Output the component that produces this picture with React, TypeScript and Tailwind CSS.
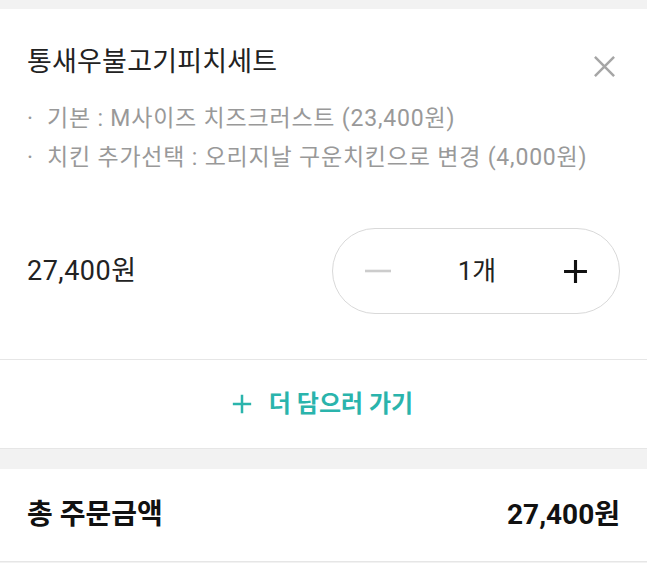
const font = { fontFamily: 'Roboto, "Noto Sans CJK KR", sans-serif' };

function PlusIcon({ className }: { className?: string }) {
	return (
		<svg viewBox="0 0 24 24" className={className} fill="none" stroke="currentColor" strokeWidth={3} strokeLinecap="butt">
			<path d="M12 1v22M1 12h22" />
		</svg>
	);
}

export default function App() {
	const options = [
		'기본 : M사이즈 치즈크러스트 (23,400원)',
		'치킨 추가선택 : 오리지날 구운치킨으로 변경 (4,000원)',
	];

	return (
		<div className="w-[647px] h-[563px] bg-[#f2f2f2] pt-[9px] overflow-hidden" style={font}>
			<div className="bg-white">
				<div className="px-[27px] pt-[36px] pb-[45px] border-b border-[#e6e6e6]">
					<div className="flex items-start justify-between">
						<h1 className="text-[27px] leading-[34px] tracking-[0.2px] text-[#222]">통새우불고기피치세트</h1>
						<button className="mt-[10px] mr-[4px] text-[#a6a6a6]">
							<svg viewBox="0 0 24 24" className="w-[23px] h-[23px]" fill="none" stroke="currentColor" strokeWidth={2.6}>
								<path d="M2 2l20 20M22 2L2 22" />
							</svg>
						</button>
					</div>
					<ul className="mt-[25px] flex flex-col gap-[9px]">
						{options.map((o) => (
							<li key={o} className="flex text-[23px] leading-[30px] tracking-[0.8px] text-[#999]">
								<span className="w-[20px]">·</span>
								<span>{o}</span>
							</li>
						))}
					</ul>
					<div className="mt-[55px] flex items-center justify-between">
						<span className="text-[27px] tracking-[0.5px] text-[#222]">27,400원</span>
						<div className="w-[288px] h-[86px] rounded-full border border-[#d9d9d9] flex items-center justify-between pl-[32px] pr-[31px]">
							<svg viewBox="0 0 26 4" className="w-[26px] h-[4px]">
								<rect width="26" height="2.6" y="0.7" fill="#cccccc" />
							</svg>
							<span className="text-[26px] text-[#222]">1개</span>
							<PlusIcon className="w-[25px] h-[25px] text-[#111]" />
						</div>
					</div>
				</div>
				<div className="h-[89px] flex items-center justify-center gap-[17px] border-b border-[#e6e6e6] text-[#2ab4ac] pr-[2px]">
					<PlusIcon className="w-[20px] h-[20px]" />
					<span className="text-[24px] font-bold">더 담으러 가기</span>
				</div>
			</div>
			<div className="mt-[20px] bg-white h-[93px] px-[27px] flex items-center justify-between border-b border-[#e6e6e6]">
				<span className="text-[28px] font-bold text-[#111]">총 주문금액</span>
				<span className="text-[28px] font-bold text-[#111]">27,400원</span>
			</div>
		</div>
	);
}
